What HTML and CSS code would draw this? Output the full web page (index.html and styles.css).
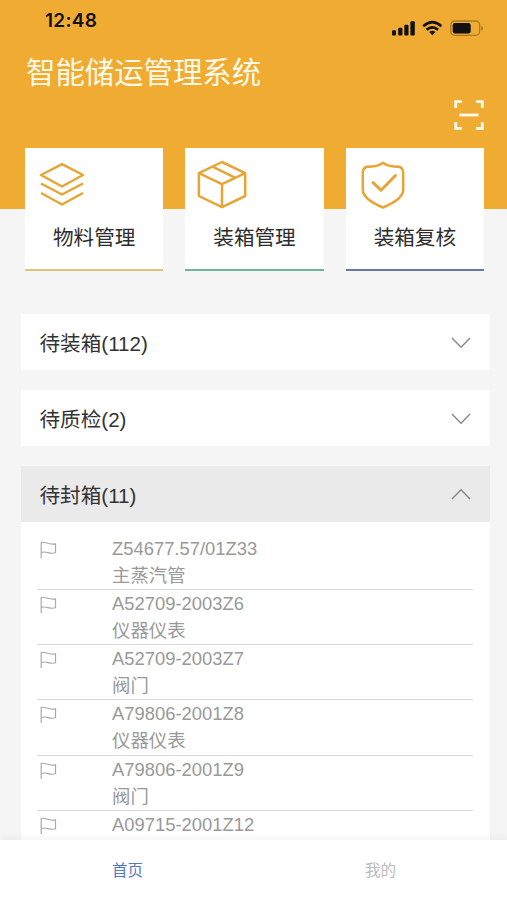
FILE: index.html
```html
<!DOCTYPE html>
<html lang="zh-CN">
<head>
<meta charset="utf-8">
<title>智能储运管理系统</title>
<link rel="stylesheet" href="styles.css">
</head>
<body>
<svg width="0" height="0" class="defs">
  <symbol id="flag" viewBox="0 0 17 18"><path d="M1.2 17V1.6C5.5-.2 8 4.4 15.500 2.800V11.800C9 13.800 6.500 9.200 1.200 11.600"/></symbol>
  <symbol id="chevron" viewBox="0 0 20 12"><path d="M1 1 10 10.2 19 1"/></symbol>
</svg>
<div class="app">
  <header class="hero">
    <div class="status">
      <span class="time">12:48</span>
      <svg class="signals" width="92" height="18" viewBox="0 0 92 18">
        <rect x="1" y="10.2" width="4" height="5.3" rx="1"/>
        <rect x="7.2" y="7.7" width="4.2" height="7.8" rx="1"/>
        <rect x="13.3" y="4.8" width="4.2" height="10.7" rx="1"/>
        <rect x="19.4" y="1.2" width="4.4" height="14.3" rx="1"/>
        <path class="wifi" d="M32.2 6.2Q41.3-2 50.4 6.2M35.5 9.8Q41.3 4.8 47.1 9.8"/>
        <path d="M38.2 12Q41.3 9.7 44.4 12L41.3 15.2Z"/>
        <rect class="shell" x="59.7" y="1" width="29" height="14.3" rx="4"/>
        <rect x="61.7" y="3.1" width="18" height="10.3" rx="2.2"/>
        <path class="tip" d="M90.2 5.8Q92 6.5 92 8.2T90.2 10.5Z"/>
      </svg>
    </div>
    <h1 class="title">智能储运管理系统</h1>
    <svg class="scan" width="30" height="30" viewBox="0 0 30 30"><path d="M1.7 8V1.7H8M22 1.7h6.3V8M28.3 22v6.3H22M8 28.3H1.7V22"/><path d="M5.5 15h19"/></svg>
  </header>

  <nav class="cards">
    <a class="card gold">
      <svg class="icon" width="50" height="50" viewBox="0 0 50 50"><path d="M24 5.2 45 16 24 27.500 3 16ZM3 24.5 24 35.5 45 24.5M3 34 24 45.500 45 34"/></svg>
      <span class="label">物料管理</span>
    </a>
    <a class="card green">
      <svg class="icon" width="50" height="50" viewBox="0 0 50 50"><path d="M24 3 47.2 14.2V37L24 48.2.9 37V14.2ZM.9 14.2 24 25.2 47.2 14.2M24 25.2V48M15 7.8 38 19.2"/></svg>
      <span class="label">装箱管理</span>
    </a>
    <a class="card blue">
      <svg class="icon" width="50" height="50" viewBox="0 0 50 50"><path d="M24 3.8C20 7 15 7.8 9.5 7.6Q4.5 8 3.8 13V31C4 38 14 44.5 24 48.5 34 44.5 44 38 44.2 31V13Q43.500 8 38.500 7.600C33 7.800 28 7 24 3.800Z"/><path class="tick" d="M14 23.600 22 31.200 36.500 16.500"/></svg>
      <span class="label">装箱复核</span>
    </a>
  </nav>

  <main class="groups">
    <section class="group-head"><span>待装箱(112)</span><svg class="chev"><use href="#chevron"/></svg></section>
    <section class="group-head"><span>待质检(2)</span><svg class="chev"><use href="#chevron"/></svg></section>
    <section class="group">
      <div class="group-head open"><span>待封箱(11)</span><svg class="chev up"><use href="#chevron"/></svg></div>
      <ul class="items">
        <li class="item"><svg class="flag"><use href="#flag"/></svg><div>Z54677.57/01Z33<br>主蒸汽管</div></li>
        <li class="item"><svg class="flag"><use href="#flag"/></svg><div>A52709-2003Z6<br>仪器仪表</div></li>
        <li class="item"><svg class="flag"><use href="#flag"/></svg><div>A52709-2003Z7<br>阀门</div></li>
        <li class="item"><svg class="flag"><use href="#flag"/></svg><div>A79806-2001Z8<br>仪器仪表</div></li>
        <li class="item"><svg class="flag"><use href="#flag"/></svg><div>A79806-2001Z9<br>阀门</div></li>
        <li class="item"><svg class="flag"><use href="#flag"/></svg><div>A09715-2001Z12</div></li>
      </ul>
    </section>
  </main>

  <footer class="tabs"><a class="tab active">首页</a><a class="tab">我的</a></footer>
</div>
</body>
</html>
```

FILE: styles.css
```css
* { box-sizing: border-box; }
body {
  margin: 0;
  background: #f5f5f5;
  color: #333;
  font-family: "Liberation Sans", "Noto Sans CJK SC", sans-serif;
}
.defs { display: block; }
.app {
  display: flex;
  flex-direction: column;
  height: 900px;
  overflow: hidden;
}
svg { flex: none; fill: none; }
.hero {
  flex: none;
  display: flex;
  flex-direction: column;
  height: 209px;
  padding: 8px 23px 0 26px;
  background: #f0ab33;
}
.status {
  display: flex;
  justify-content: space-between;
  height: 40px;
  padding: 0 1px 0 19px;
}
.time {
  color: #111;
  font: 600 19px/25px Inter, sans-serif;
  letter-spacing: .3px;
}
.signals { margin: 12px 0 0; fill: #111; }
.wifi { fill: none; stroke: #111; stroke-width: 2.7; }
.shell { fill: none; stroke: #aa7925; stroke-width: 1.3; }
.tip { fill: #aa7925; }
.title {
  margin: 3px 0 0;
  color: #fff9e8;
  font-size: 29.4px;
  font-weight: 400;
  line-height: 44px;
  white-space: nowrap;
}
.scan {
  align-self: flex-end;
  margin-top: 5px;
  stroke: #fffaf0;
  stroke-width: 2.8;
}
.cards {
  flex: none;
  display: grid;
  grid-template-columns: repeat(3, 1fr);
  gap: 22px;
  height: 123px;
  margin: -61px 23px 0 25px;
}
.card {
  display: flex;
  flex-direction: column;
  padding: 11px 13px 0;
  background: #fff;
  border-bottom: 2px solid;
}
.gold { border-color: #dac477; }
.green { border-color: #6fb39d; }
.blue { border-color: #6577ad; }
.icon {
  stroke: #e7a535;
  stroke-width: 2.5;
  stroke-linejoin: round;
  overflow: visible;
}
.tick { stroke-width: 3; stroke-linecap: round; }
.label {
  margin-top: 14px;
  font-size: 20.6px;
  line-height: 30px;
  text-align: center;
  color: #2d2d2d;
}
.groups {
  flex: 1;
  min-height: 0;
  display: flex;
  flex-direction: column;
  gap: 19.5px;
  padding: 43px 17.5px 0 20.5px;
}
.group-head {
  flex: none;
  display: flex;
  align-items: center;
  justify-content: space-between;
  height: 56.3px;
  padding: 0 19px;
  background: #fff;
  font-size: 20.6px;
}
.group { flex: 1; min-height: 0; display: flex; flex-direction: column; }
.open { background: #eaeaea; }
.chev { width: 20px; height: 12px; margin-top: 2px; stroke: #888; stroke-width: 1.4; }
.up { margin-top: 0; transform: rotate(180deg); }
.items {
  flex: 1;
  min-height: 0;
  overflow: hidden;
  margin: 0;
  padding: 13px 16.5px 0;
  background: #fff;
  list-style: none;
}
.item {
  display: flex;
  gap: 55px;
  height: 55.2px;
  padding-left: 3px;
  border-bottom: 1px solid #d8d8d8;
  color: #999;
  font-size: 18.4px;
  line-height: 27px;
}
.flag { width: 17px; height: 18px; margin-top: 6px; stroke: #aaa; stroke-width: 1.2; }
.tabs {
  flex: none;
  position: relative;
  display: flex;
  height: 60px;
  padding-left: 1px;
  background: #fff;
  box-shadow: 0 -3px 6px rgba(0, 0, 0, .04);
}
.tab {
  flex: 1;
  font-size: 15.5px;
  line-height: 62px;
  text-align: center;
  color: #bbb;
}
.active { color: #5378c5; }
```
